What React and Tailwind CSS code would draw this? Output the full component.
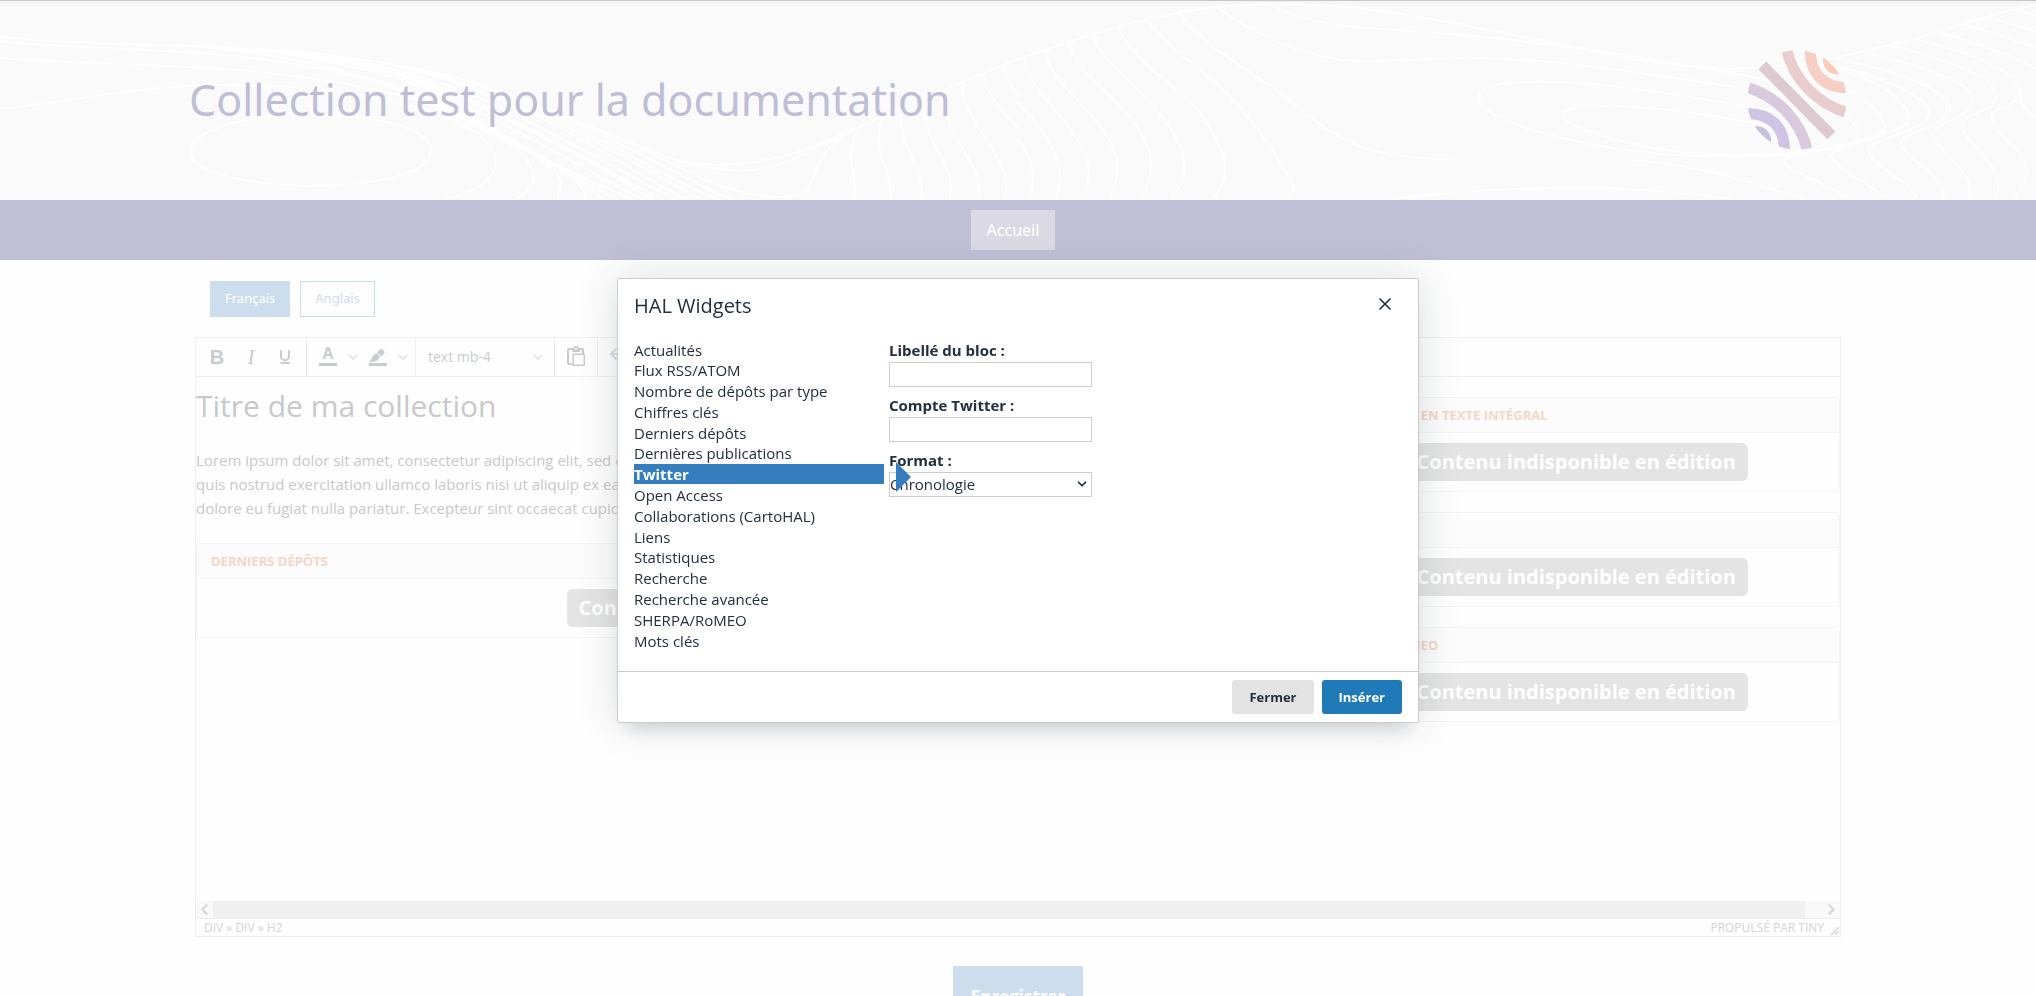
import { useState } from 'react';
import { ChevronDown, ChevronLeft, ChevronRight, Undo2, X } from 'lucide-react';

const WIDGETS = [
  'Actualités',
  'Flux RSS/ATOM',
  'Nombre de dépôts par type',
  'Chiffres clés',
  'Derniers dépôts',
  'Dernières publications',
  'Twitter',
  'Open Access',
  'Collaborations (CartoHAL)',
  'Liens',
  'Statistiques',
  'Recherche',
  'Recherche avancée',
  'SHERPA/RoMEO',
  'Mots clés',
];

// Contour lines of the banner, left half
const CONTOURS_LEFT = [
  'M0 107 C100 128 220 132 330 138 C480 148 600 180 720 240 C850 320 950 420 1040 480 C1110 510 1180 490 1250 440 C1350 350 1460 260 1568 172',
  'M0 121 C110 143 200 140 330 160 C470 185 560 230 640 280 C740 350 860 500 930 600',
  'M0 172 C120 190 260 188 390 212 C530 240 640 290 710 340 C780 400 860 500 862 545 L857 600',
  'M0 325 C110 305 200 255 350 253 C520 252 640 310 700 360 C780 440 790 540 685 600',
  'M292 455 C292 390 380 340 480 342 C590 345 663 390 663 450 C663 520 580 557 475 557 C370 555 292 510 292 455 Z',
  'M240 132 C420 140 560 220 640 290 C760 400 850 500 975 600',
  'M280 136 C460 150 600 250 690 330 C790 420 880 530 950 600',
  'M330 139 C500 160 620 230 700 300 C820 410 900 510 990 600',
  'M400 148 C560 175 660 250 740 320 C860 430 930 510 1005 600',
  'M460 156 C600 190 700 270 770 340 C880 450 950 530 1020 600',
  'M520 170 C640 210 730 280 800 350 C890 440 960 520 1040 600',
  'M590 186 C700 235 760 290 830 350 C920 440 980 520 1055 600',
  'M640 205 C720 250 790 310 850 360 C940 440 1000 520 1080 600',
  'M690 226 C770 270 830 330 880 375 C960 450 1030 540 1105 600',
  'M740 252 C820 310 880 360 920 400 C1000 470 1060 550 1130 600',
  'M560 228 C700 310 820 440 820 530 C820 560 805 590 790 600',
  'M700 340 C800 430 890 520 899 580 L899 600',
  'M930 400 C1000 450 1040 500 1090 545 C1150 590 1215 610 1240 570 C1260 520 1245 480 1300 400 C1330 370 1340 360 1360 350',
  'M1040 480 C1100 515 1160 525 1210 485 C1240 460 1255 440 1285 415',
  'M1328 370 C1290 450 1320 530 1313 600',
  'M1358 345 C1335 450 1375 520 1369 600',
  'M1385 330 C1380 450 1430 520 1414 600',
  'M1418 300 C1420 440 1475 500 1459 600',
  'M1448 270 C1450 420 1520 500 1503 600',
  'M1480 245 C1475 370 1565 480 1544 600',
  'M1510 218 C1520 300 1550 350 1568 385',
  'M1541 195 C1545 230 1555 260 1568 290',
];

// Right half
const CONTOURS_RIGHT = [
  'M0 178 C100 110 230 15 375 10 C550 0 700 80 850 136 C950 180 1010 195 1080 204 C1200 210 1270 165 1350 130 C1430 90 1500 35 1568 12',
  'M388 8 C430 55 480 75 570 86 C700 100 800 125 910 155 C1040 195 1120 220 1180 250',
  'M307 16 C380 120 460 180 530 182 C620 180 670 160 810 182 C960 210 1060 250 1180 280 C1260 310 1300 370 1295 410 C1285 450 1180 475 1050 467 C900 460 710 370 711 290 C715 240 800 235 890 252 C970 265 1070 300 1160 330',
  'M1160 380 C1080 345 960 310 880 317 C830 325 830 355 870 385 C930 430 1020 470 1130 463 C1200 460 1255 450 1250 400',
  'M250 34 C290 150 390 240 440 330 C490 410 530 475 670 478 C820 485 940 470 990 488 C1080 510 1150 560 1215 600',
  'M201 54 C240 160 300 220 340 310 C380 400 400 470 426 550 C428 580 420 590 415 600',
  'M157 76 C180 190 240 240 280 330 C320 440 340 520 300 600',
  'M118 98 C130 190 190 250 220 340 C260 430 275 520 236 600',
  'M80 122 C90 200 140 270 175 350 C215 450 215 520 191 600',
  'M46 146 C45 220 100 300 130 380 C165 470 160 530 143 600',
  'M12 168 C20 260 60 320 85 390 C115 480 120 530 100 600',
  'M0 300 C60 420 80 520 61 600',
  'M0 412 C30 480 30 540 20 600',
  'M578 598 C680 570 780 564 880 563 C970 566 1040 580 1103 598',
  'M1230 190 C1330 230 1380 310 1370 370 C1340 410 1260 440 1252 465 C1260 510 1320 560 1340 600',
  'M1210 225 C1290 260 1340 340 1335 390 C1300 440 1190 455 1180 480 C1180 510 1260 560 1285 600',
  'M1225 180 C1310 210 1415 290 1403 350 C1390 390 1330 410 1312 440 C1300 490 1380 540 1385 600',
  'M1262 175 C1350 210 1445 270 1435 335 C1420 380 1370 390 1360 430 C1360 470 1430 520 1426 600',
  'M1305 155 C1400 200 1480 250 1470 310 C1465 350 1420 360 1408 400 C1410 450 1480 510 1464 600',
  'M1340 132 C1440 180 1520 240 1504 300 C1495 340 1450 340 1455 380 C1460 440 1530 500 1505 600',
  'M1380 112 C1470 160 1545 210 1545 280 C1535 320 1500 320 1500 350 C1505 420 1570 460 1550 550 L1532 600',
  'M1416 92 C1480 130 1540 170 1568 205',
  'M1455 70 C1500 95 1540 120 1568 142',
  'M1495 47 C1520 65 1550 80 1568 92',
  'M1532 26 L1568 44',
  'M1541 270 C1545 320 1555 340 1568 350',
];

const Contours = () => (
  <svg
    className="absolute inset-0 w-full h-full"
    viewBox="0 0 2036 200"
    preserveAspectRatio="none"
    fill="none"
    stroke="#ffffff"
    strokeWidth="2"
    aria-hidden="true"
  >
    <g transform="scale(0.6505 0.3333)">
      {CONTOURS_LEFT.map((d) => <path key={d} d={d} vectorEffect="non-scaling-stroke" />)}
    </g>
    <g transform="translate(1016 0) scale(0.6505 0.3333)">
      {CONTOURS_RIGHT.map((d) => <path key={d} d={d} vectorEffect="non-scaling-stroke" />)}
    </g>
  </svg>
);

const Logo = () => (
  <svg className="w-[100px] h-[100px]" viewBox="80 60 300 300" fill="none" strokeWidth="33" aria-hidden="true">
    <clipPath id="disc">
      <circle cx="230" cy="210" r="149" />
    </clipPath>
    <g clipPath="url(#disc)">
      <circle cx="350" cy="91" r="42" fill="#fecbb9" />
      <path d="M270 50 C266 130 310 177 390 173" stroke="#f5cfc6" />
      <path d="M197 50 C215 145 290 225 390 251" stroke="#e9cccd" />
      <path d="M70 169 C170 195 245 275 263 370" stroke="#d9c9dd" />
      <path d="M70 251 C150 247 196 290 192 370" stroke="#cfc4e3" />
      <circle cx="110" cy="331" r="42" fill="#c4c2dc" />
    </g>
    <path d="M126 106 L333 316" stroke="#dfc9d0" />
  </svg>
);

const PenIcon = () => (
  <svg className="w-6 h-6" viewBox="0 0 24 24" fill="#c8cbcf" aria-hidden="true">
    <path d="M3 18h18v3H3z" />
    <path d="M7.7 16.7H3l3.3-3.3-.7-.8L10.2 8l4 4.1-4 4.2c-.2.2-.6.2-.8 0l-.6-.7-1.1 1.1zm5-7.5L11 7.4l3-2.9a2 2 0 0 1 2.6 0L18 6c.7.7.7 2 0 2.7l-2.9 2.9-1.8-1.8-.5-.6" />
  </svg>
);

const PasteIcon = () => (
  <svg className="w-6 h-6" viewBox="0 0 24 24" fill="#c8cbcf" fillRule="evenodd" aria-hidden="true">
    <path d="M18 9V5h-2v1c0 .6-.4 1-1 1H9a1 1 0 0 1-1-1V5H5v13h4v2H5a2 2 0 0 1-2-2V5c0-1.100.9-2 2-2h4.200A3 3 0 0 1 12 1a3 3 0 0 1 2.800 2H18a2 2 0 0 1 2 2v4ZM12 3a1 1 0 1 0 0 2 1 1 0 0 0 0-2Z" />
    <path d="M8.500 8.500h12.500v12.500H8.500ZM10 10v9.500h9.500V10Z" />
  </svg>
);

const ToolButton = ({ label, children }) => (
  <button type="button" aria-label={label} className="w-[34px] h-[34px] flex items-center justify-center">
    {children}
  </button>
);

const SplitButton = ({ label, children }) => (
  <div className="flex items-center">
    <ToolButton label={label}>{children}</ToolButton>
    <button type="button" aria-label={`${label}, options`} className="w-4 flex justify-center">
      <ChevronDown className="w-4 h-4 shrink-0" color="#dedfe1" />
    </button>
  </div>
);

const Toolbar = () => (
  <div className="h-[39px] shrink-0 flex border-b border-[#eeeeee] text-[#c8cbcf]">
    <div className="flex items-center px-1 border-r border-[#eeeeee]">
      <ToolButton label="Gras"><span className="font-['Liberation_Sans'] font-bold text-xl">B</span></ToolButton>
      <ToolButton label="Italique"><span className="font-['Liberation_Serif'] italic text-xl">I</span></ToolButton>
      <ToolButton label="Souligné">
        <svg className="w-6 h-6" viewBox="0 0 24 24" fill="none" stroke="#c8cbcf" strokeWidth="2" strokeLinecap="round" aria-hidden="true">
          <path d="M8 6v5.500a4 3.700 0 0 0 8 0V6M8 18h8" />
        </svg>
      </ToolButton>
    </div>
    <div className="flex items-center px-1 border-r border-[#eeeeee]">
      <SplitButton label="Couleur du texte">
        <span className="w-[18px] h-[18px] border-b-3 border-[#c8cbcf] flex items-start justify-center font-['Liberation_Sans'] font-bold text-base leading-3">
          A
        </span>
      </SplitButton>
      <SplitButton label="Couleur de fond"><PenIcon /></SplitButton>
    </div>
    <div className="w-[139px] flex items-center px-1 border-r border-[#eeeeee]">
      <button type="button" className="w-full flex items-center justify-between pl-2 pr-1 text-sm">
        text mb-4
        <ChevronDown className="w-4 h-4" color="#dedfe1" />
      </button>
    </div>
    <div className="flex items-center px-1 border-r border-[#eeeeee]">
      <ToolButton label="Coller"><PasteIcon /></ToolButton>
    </div>
    <div className="flex items-center px-1">
      <ToolButton label="Annuler"><Undo2 className="w-6 h-6" color="#dedfe1" /></ToolButton>
    </div>
  </div>
);

const BlocCard = ({ title }) => (
  <section className="border border-[#f4f4f4] rounded-sm text-center">
    <h3 className="h-[35px] px-3.5 bg-[#fcfcfc] border-b border-[#f6f6f6] text-left text-[13px] leading-[35px] font-bold uppercase text-[#f5d5c6]">
      {title}
    </h3>
    <div className="py-2.5">
      <span className="inline-block align-top h-[38px] px-3 rounded-md bg-[#e4e4e4] text-white text-xl leading-[38px] font-bold">
        Contenu indisponible en édition
      </span>
    </div>
  </section>
);

const Editor = () => (
  <div className="h-[600px] flex flex-col border border-[#eeeeee] bg-[#fefefe]">
    <Toolbar />
    <div className="flex-1 grid grid-cols-[37fr_18fr] items-start gap-8 overflow-hidden">
      <div className="pt-[9px]">
        <h2 className="text-3xl leading-10 text-[#c8c9ca] mb-[22px]">Titre de ma collection</h2>
        <p className="text-[15px] leading-6 text-[#c8c9ca] mb-[23px] whitespace-nowrap">
          Lorem ipsum dolor sit amet, consectetur adipiscing elit, sed do eiusmod tempor incididunt ut labore<br />
          quis nostrud exercitation ullamco laboris nisi ut aliquip ex ea commodo consequat. Duis aute irure<br />
          dolore eu fugiat nulla pariatur. Excepteur sint occaecat cupidatat non proident.
        </p>
        <BlocCard title="Derniers dépôts" />
      </div>
      <div className="pt-5 flex flex-col gap-5">
        <BlocCard title="Documents : en texte intégral" />
        <BlocCard title="Mots clés" />
        <BlocCard title="Sherpa / Romeo" />
      </div>
    </div>
    <div className="h-[17px] shrink-0 flex items-center justify-between bg-[#f9f9f9]">
      <ChevronLeft className="w-[17px] h-[17px]" strokeWidth={3} color="#d6d6d6" />
      <div className="flex-1 h-full mr-[18px] bg-[#f0f0f0]" />
      <ChevronRight className="w-[17px] h-[17px]" strokeWidth={3} color="#d6d6d6" />
    </div>
    <div className="h-[18px] shrink-0 flex items-center justify-between pl-2 border-t border-[#eeeeee] text-xs text-[#d3d5d7]">
      <span>DIV » DIV » H2</span>
      <span className="flex items-center gap-1">
        <a href="#tiny">PROPULSÉ PAR TINY</a>
        <svg className="w-3 h-3 self-end" viewBox="0 0 12 12" stroke="#d3d5d7" strokeWidth="1.500" aria-hidden="true">
          <path d="M3 11 L11 3 M7 11 L11 7" />
        </svg>
      </span>
    </div>
  </div>
);

const WidgetDialog = () => {
  const [active, setActive] = useState('Twitter');

  return (
    <div className="fixed inset-0 flex items-center justify-center pt-1">
      <div
        role="dialog"
        aria-label="HAL Widgets"
        className="w-[802px] bg-white border border-[#cccccc] rounded-xs text-[#222f3e] shadow-[0_16px_16px_-10px_rgba(34,47,62,0.15),0_0_40px_1px_rgba(34,47,62,0.15)]"
      >
        <div className="h-[61px] flex items-start justify-between px-4 pt-2">
          <h1 className="text-xl leading-[38px]">HAL Widgets</h1>
          <button type="button" aria-label="Fermer la fenêtre" className="w-[34px] h-[34px] flex items-center justify-center">
            <X className="w-5 h-5" strokeWidth={2} />
          </button>
        </div>

        <div className="flex gap-[5px] px-4 pb-[19px]">
          <ul className="w-[250px] h-[312px] grid auto-rows-fr text-[15px] leading-5">
            {WIDGETS.map((name) => (
              <li key={name} className="relative">
                <button
                  type="button"
                  onClick={() => setActive(name)}
                  className={`w-full h-5 block text-left ${name === active ? 'bg-[#347ebf] text-white font-bold' : ''}`}
                >
                  {name}
                </button>
                {name === active && (
                  <span className="absolute left-[262px] -top-0.5 border-y-[15px] border-l-[15px] border-y-transparent border-l-[#347ebf]" />
                )}
              </li>
            ))}
          </ul>

          <form className="w-[203px] flex flex-col gap-2 text-[15px]">
            <div className="flex flex-col gap-[2px]">
              <label htmlFor="bloc" className="font-bold leading-5">Libellé du bloc :</label>
              <input id="bloc" type="text" className="h-[25px] px-px border border-[#cccccc] bg-white" />
            </div>
            <div className="flex flex-col gap-[2px]">
              <label htmlFor="compte" className="font-bold leading-5">Compte Twitter :</label>
              <input id="compte" type="text" className="h-[25px] px-px border border-[#cccccc] bg-white" />
            </div>
            <div className="flex flex-col gap-[2px]">
              <label htmlFor="format" className="font-bold leading-5">Format :</label>
              <div className="grid items-center">
                <select id="format" className="col-start-1 row-start-1 h-[25px] w-full appearance-none border border-[#cccccc] bg-white leading-5">
                  <option>Chronologie</option>
                  <option>Bouton</option>
                </select>
                <ChevronDown className="col-start-1 row-start-1 justify-self-end w-3.5 h-3.5 mr-[3px] pointer-events-none" strokeWidth={3} />
              </div>
            </div>
          </form>
        </div>

        <div className="flex justify-end gap-2 border-t border-[#cccccc] px-4 py-2 text-[13px] leading-6 font-bold">
          <button type="button" className="px-[17px] h-[34px] rounded-[3px] bg-[#e3e3e3]">Fermer</button>
          <button type="button" className="px-[17px] h-[34px] rounded-[3px] bg-[#207ab7] text-white">Insérer</button>
        </div>
      </div>
    </div>
  );
};

export default function App() {
  return (
    <div className="h-screen overflow-hidden bg-[#fefefe] font-['Open_Sans',sans-serif]">
      <header className="relative h-[200px] bg-[#fafafa] border-t border-[#c8c8c8] shadow-[inset_0_6px_6px_-4px_rgba(0,0,0,0.04)]">
        <Contours />
        <div className="relative h-full max-w-[1658px] mx-auto pb-px flex items-center justify-between">
          <div className="text-[43px] text-[#bebed6] font-['Noto_Sans',sans-serif]">Collection test pour la documentation</div>
          <Logo />
        </div>
      </header>

      <nav className="h-[60px] pr-2.5 bg-[#bfbfd6] flex items-center justify-center">
        <a href="#accueil" className="h-10 px-4 bg-[#dbdae4] text-white text-base leading-10 font-['Noto_Sans',sans-serif]">
          Accueil
        </a>
      </nav>

      <main className="max-w-[1646px] mx-auto">
        <div className="flex gap-2.5 px-[15px] pt-[21px] pb-5 text-[13px] font-['Noto_Sans',sans-serif]">
          <button type="button" className="h-9 px-3.5 border border-[#ccdded] bg-[#ccdded] text-white">Français</button>
          <button type="button" className="h-9 px-3.5 border border-[#ccdded] text-[#ccdded]">Anglais</button>
        </div>
        <Editor />
        <div className="flex justify-center pt-[29px]">
          <button type="submit" className="h-[62px] px-[18px] bg-[#ccdded] text-white text-[17px] font-bold">Enregistrer</button>
        </div>
      </main>

      <WidgetDialog />
    </div>
  );
}
